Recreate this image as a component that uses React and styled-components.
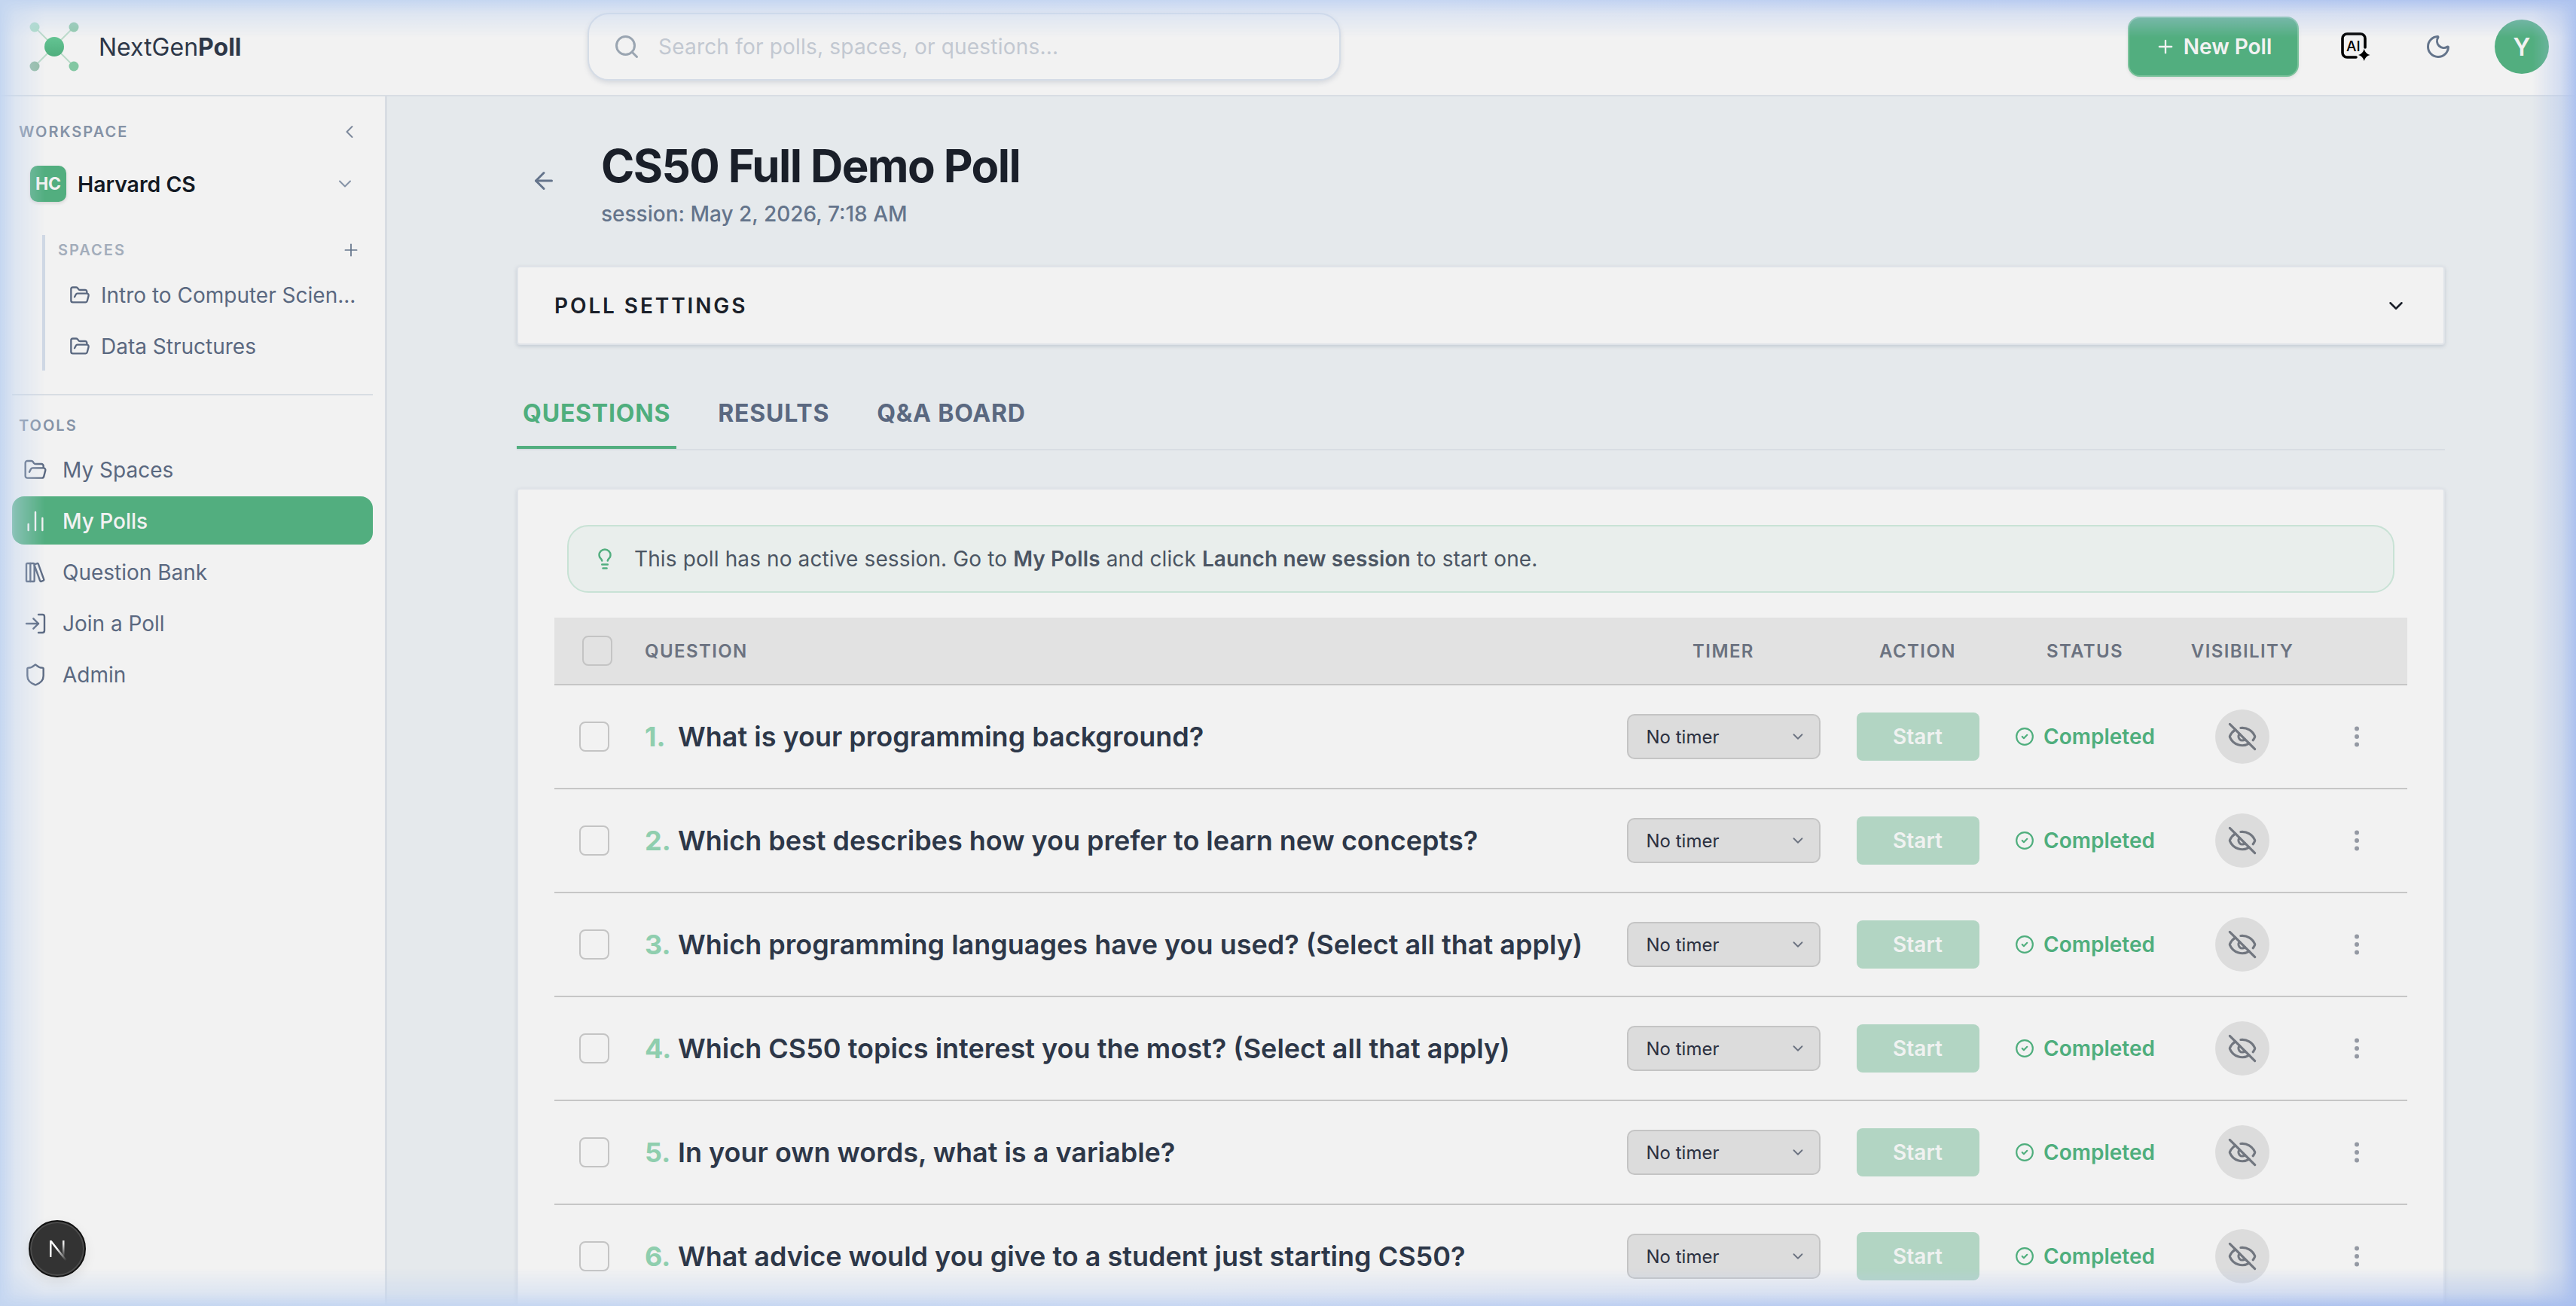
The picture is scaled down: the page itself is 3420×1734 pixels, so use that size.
import React from "react";
import styled, { createGlobalStyle } from "styled-components";
import {
  ArrowLeft, ChartNoAxesColumn, ChevronDown, ChevronLeft, CircleCheck, EllipsisVertical, EyeOff,
  FolderOpen, LibraryBig, Lightbulb, LogIn, Moon, Plus, Search, Shield,
} from "lucide-react";

const Global = createGlobalStyle`
  * { box-sizing: border-box; }
  html, body { margin: 0; padding: 0; height: 100%; overflow: hidden; }
  body { font-family: Inter, "Liberation Sans", sans-serif; background: #e5e9ec; color: #1a1f29; }
`;

const edgeMask = `linear-gradient(to right, #000 0, rgba(0,0,0,.45) 20px, transparent 60px, transparent calc(100% - 58px), rgba(0,0,0,.45) calc(100% - 20px), #000 100%),
    linear-gradient(to bottom, #000 0, rgba(0,0,0,.45) 18px, transparent 50px, transparent calc(100% - 50px), rgba(0,0,0,.45) calc(100% - 18px), #000 100%)`;

const Shell = styled.div`
  position: relative; width: 3420px; height: 1734px; overflow: hidden;
  display: flex; flex-direction: column; background: #e5e9ec;
`;
const Glow = styled.div`
  position: absolute; inset: 0; pointer-events: none; z-index: 5;
  background: linear-gradient(100deg, #c4d6f0 0%, #c6d6f2 50%, #a9bfee 100%);
  -webkit-mask-image: ${edgeMask};
  mask-image: ${edgeMask};
  -webkit-mask-composite: source-over; mask-composite: add;
`;
const TopBar = styled.header`
  height: 128px; flex: none; display: flex; align-items: center; background: #f2f2f2;
  border-bottom: 2px solid #d8dde3; padding: 0 36px 2px 38px;
`;
const Brand = styled.div`
  display: flex; align-items: center; gap: 25px; width: 742px; font-size: 32px; color: #2d3748;
  b { font-weight: 700; }
`;
const SearchBox = styled.div`
  width: 1000px; height: 90px; display: flex; align-items: center; gap: 24px; padding: 0 32px;
  border: 2px solid #d5dce6; border-radius: 28px; background: #f2f2f2;
  box-shadow: 0 3px 6px rgba(100,116,139,.2); color: #c2c8d1; font-size: 28px; letter-spacing: .2px;
  svg { color: #9aa5b1; flex: none; }
`;
const Actions = styled.div`
  margin-left: auto; display: flex; align-items: center;
`;
const NewPoll = styled.button`
  width: 227px; height: 80px; border: 2px solid #7cc39c; border-radius: 16px; background: #52ae7f; color: #f2f2f2;
  display: flex; align-items: center; justify-content: center; gap: 10px; font: 600 28px Inter, sans-serif;
  box-shadow: 0 2px 4px rgba(0,0,0,.08); margin-right: 55px;
`;
const IconSlot = styled.div`
  display: flex; margin-right: ${p => p.$mr}px; color: #64748b;
`;
const Avatar = styled.div`
  width: 72px; height: 72px; border-radius: 50%; background: #52ae7f; color: #f2f2f2; font-size: 32px; font-weight: 600;
  display: flex; align-items: center; justify-content: center;
`;
const Body = styled.div`
  flex: 1; display: flex; min-height: 0;
`;
const Side = styled.aside`
  width: 514px; flex: none; background: #f2f2f2; border-right: 3px solid #d8dde3; padding: 32px 16px 0;
  display: flex; flex-direction: column;
`;
const SideHead = styled.div`
  display: flex; align-items: center; justify-content: space-between; padding: 0 17px 0 9px; height: 30px;
  font-size: 20px; font-weight: 600; letter-spacing: 2px; color: #8592a6; svg { color: #7c889b; }
`;
const Workspace = styled.div`
  display: flex; align-items: center; height: 48px; margin: 30px 0 0 24px; padding-right: 23px;
  font-size: 28.400px; font-weight: 600; color: #141a24;
  svg { margin-left: auto; color: #8592a6; }
`;
const WsBadge = styled.div`
  width: 48px; height: 48px; border-radius: 10px; background: #52ae7f; color: #f2f2f2; font-size: 23px; font-weight: 700;
  display: flex; align-items: center; justify-content: center; margin-right: 15px;
  box-shadow: 0 2px 4px rgba(0,0,0,.12);
`;
const Spaces = styled.div`
  margin: 44px 0 0 40px; border-left: 4px solid #d0d8e4; height: 180px; padding: 6px 0 0 17px;
`;
const SpacesHead = styled.div`
  display: flex; align-items: center; justify-content: space-between; height: 28px; padding-right: 16px; margin-bottom: 12px;
  font-size: 20px; font-weight: 600; letter-spacing: 2px; color: #a3adbb; svg { color: #64748b; }
`;
const SpaceItem = styled.div`
  display: flex; align-items: center; gap: 14px; height: 68px; padding-left: 15px; font-size: 28px; color: #5a6880;
  white-space: nowrap; svg { flex: none; }
`;
const SideRule = styled.div`
  height: 2px; background: #d8dde3; margin-top: 31px;
`;
const ToolsLabel = styled.div`
  margin: 28px 0 0 9px; height: 24px; line-height: 24px; font-size: 20px; font-weight: 600; letter-spacing: 2px; color: #8592a6;
`;
const ToolList = styled.div`
  margin-top: 14px; display: flex; flex-direction: column; gap: 4px;
`;
const ToolItem = styled.div`
  height: 64px; display: flex; align-items: center; gap: 20px; padding: 2px 0 0 15px; border-radius: 16px; font-size: 28px;
  color: ${p => p.$active ? "#f2f2f2" : "#5a6880"}; background: ${p => p.$active ? "#52ae7f" : "transparent"};
  font-weight: ${p => p.$active ? 500 : 400};
`;
const Main = styled.main`
  flex: 1; min-width: 0; overflow: hidden; padding: 56px 174px 0 172px;
`;
const TitleRow = styled.div`
  display: flex; align-items: center; gap: 58px; padding-left: 18px;
`;
const BackIcon = styled.div`
  display: flex; color: #64748b; margin-top: -8px;
`;
const Title = styled.h1`
  margin: 0; font-size: 60px; line-height: 72px; font-weight: 700; letter-spacing: -1.6px; color: #1a1f29;
`;
const Sub = styled.div`
  margin-top: 8px; font-size: 28px; line-height: 40px; font-weight: 500; color: #64748b;
`;
const Settings = styled.div`
  margin-top: 49px; height: 105px; display: flex; align-items: center; justify-content: space-between;
  padding: 0 48px; background: #f2f2f2; border: 2px solid #dfe3e8; border-radius: 4px;
  box-shadow: 0 2px 5px rgba(100,116,139,.25); font-size: 28px; font-weight: 600; letter-spacing: 2.900px; color: #1a1f29;
`;
const Tabs = styled.div`
  margin-top: 44px; display: flex; gap: 47px; border-bottom: 2px solid #d8dde3;
`;
const Tab = styled.div`
  padding: 27px 8px 23px; line-height: 40px; font-size: 32px; font-weight: 700; letter-spacing: .8px;
  color: ${p => p.$active ? "#4fae7d" : "#5a6880"};
  border-bottom: 4px solid ${p => p.$active ? "#52ae7f" : "transparent"};
`;
const Card = styled.section`
  margin-top: 50px; background: #f2f2f2; border: 2px solid #dfe3e8; border-radius: 4px; padding: 47px 48px 0;
  box-shadow: 0 2px 5px rgba(100,116,139,.2);
`;
const Banner = styled.div`
  margin: 0 17px; height: 90px; display: flex; align-items: center; gap: 24px; padding-left: 33px;
  background: #e9eeec; border: 2px solid #c8e2d5; border-radius: 28px; font-size: 28px; color: #4b5563; letter-spacing: .12px;
  b { font-weight: 600; } svg { color: #52ae7f; flex: none; }
`;
const cols = "120px 1288px 288px 228px 216px 202px 1fr";
const HeadRow = styled.div`
  margin-top: 33px; height: 90px; display: grid; grid-template-columns: ${cols}; align-items: center;
  background: #e2e2e2; border-bottom: 2px solid #c6c6c6; font-size: 24px; font-weight: 600; letter-spacing: 1.400px; color: #6b7280;
`;
const HeadCell = styled.div`
  text-align: center;
  &:nth-child(2) { text-align: left; }
`;
const Row = styled.div`
  height: 138px; display: grid; grid-template-columns: ${cols}; align-items: center; border-bottom: 2px solid #c6c6c6;
`;
const Check = styled.div`
  width: 40px; height: 40px; border: 2px solid #c4c4c4; border-radius: 8px; margin-left: ${p => p.$ml}px;
`;
const Question = styled.div`
  font-size: 36px; font-weight: 600; color: #2d3748; white-space: nowrap;
  span { display: inline-block; width: 44px; color: #8fceae; font-weight: 700; }
`;
const TimerSelect = styled.div`
  justify-self: center; width: 257px; height: 60px; display: flex; align-items: center; justify-content: space-between;
  padding: 0 17px 0 24px; background: #dcdcdc; border: 2px solid #c4c4c4; border-radius: 10px; font-size: 24px; color: #2b3040;
  svg { color: #6b7280; }
`;
const StartBtn = styled.div`
  justify-self: center; width: 163px; height: 64px; display: flex; align-items: center; justify-content: center;
  background: #b2d5c3; border-radius: 8px; color: #f0f2f1; font-size: 28px; font-weight: 600;
`;
const Status = styled.div`
  justify-self: center; display: flex; align-items: center; gap: 12px; color: #4fae7d; font-size: 28px; font-weight: 600;
`;
const VisBtn = styled.div`
  justify-self: center; width: 72px; height: 72px; border-radius: 50%; background: #dcdcdc; color: #71767f;
  display: flex; align-items: center; justify-content: center;
`;
const MenuBtn = styled.div`
  display: flex; color: #9499a3; margin-left: 33px;
`;
const DevBadge = styled.div`
  position: absolute; left: 38px; bottom: 38px; width: 76px; height: 76px; border-radius: 50%; z-index: 6;
  background: #333; border: 2px solid #111; box-shadow: inset 0 0 0 2px rgba(255,255,255,.12), 0 6px 16px rgba(0,0,0,.08);
  display: flex; align-items: center; justify-content: center;
`;

const Logo = () => (
  <svg width="68" height="68" viewBox="0 0 68 68">
    <defs>
      <linearGradient id="lg" x1="0" y1="0" x2="0" y2="1"><stop offset="0" stopColor="#64c493" /><stop offset="1" stopColor="#4fae7d" /></linearGradient>
    </defs>
    <path d="M8 8 60 60M60 8 8 60" stroke="#52ae7f" strokeOpacity=".35" strokeWidth="2" />
    <circle cx="8" cy="8" r="6.500" fill="#a8dcc2" />
    <circle cx="60" cy="8" r="6.500" fill="#8fc8aa" />
    <circle cx="8" cy="60" r="6.500" fill="#93bca6" />
    <circle cx="60" cy="60" r="6.500" fill="#82c7a2" />
    <circle cx="34" cy="34" r="13" fill="url(#lg)" />
  </svg>
);
const AiIcon = () => (
  <svg width="40" height="40" viewBox="0 0 40 40">
    <path d="M33 21V9a6 6 0 0 0-6-6H9a6 6 0 0 0-6 6V28a6 6 0 0 0 6 6H21" fill="none" stroke="#000" strokeWidth="3.600" strokeLinecap="round" />
    <text x="8" y="26" fontFamily="Inter, sans-serif" fontSize="19" fontWeight="500" fill="#000">AI</text>
    <path d="M31.700 23Q33.500 29.500 39.500 31Q33.500 32.500 31.700 39Q29.900 32.500 24 31Q29.900 29.500 31.700 23Z" fill="#000" />
  </svg>
);
const NextMark = () => (
  <svg width="36" height="36" viewBox="0 0 36 36">
    <defs>
      <linearGradient id="na" x1="0.2" y1="0" x2="0.9" y2="1"><stop offset="0.35" stopColor="#fff" /><stop offset="1" stopColor="#fff" stopOpacity="0" /></linearGradient>
      <linearGradient id="nb" x1="0" y1="0" x2="0" y2="1"><stop offset="0" stopColor="#fff" stopOpacity="0" /><stop offset="0.8" stopColor="#fff" stopOpacity=".9" /></linearGradient>
    </defs>
    <path d="M8 29V7h2.500L31 33l-2 1.500L10.500 11V29z" fill="url(#na)" />
    <rect x="25" y="7" width="2.500" height="22" fill="url(#nb)" transform="rotate(180 26.250 18)" />
  </svg>
);

const questions = [
  "What is your programming background?",
  "Which best describes how you prefer to learn new concepts?",
  "Which programming languages have you used? (Select all that apply)",
  "Which CS50 topics interest you the most? (Select all that apply)",
  "In your own words, what is a variable?",
  "What advice would you give to a student just starting CS50?",
];
const tools = [
  [FolderOpen, "My Spaces"],
  [ChartNoAxesColumn, "My Polls", true],
  [LibraryBig, "Question Bank"],
  [LogIn, "Join a Poll"],
  [Shield, "Admin"],
];

export default function App() {
  return (
    <Shell>
      <Global />
      <TopBar>
        <Brand><Logo /><div>NextGen<b>Poll</b></div></Brand>
        <SearchBox><Search size={36} strokeWidth={2} />Search for polls, spaces, or questions...</SearchBox>
        <Actions>
          <NewPoll><Plus size={28} strokeWidth={2} />New Poll</NewPoll>
          <IconSlot $mr={72}><AiIcon /></IconSlot>
          <IconSlot $mr={57}><Moon size={36} /></IconSlot>
          <Avatar>Y</Avatar>
        </Actions>
      </TopBar>
      <Body>
        <Side>
          <SideHead>WORKSPACE<ChevronLeft size={28} strokeWidth={1.700} /></SideHead>
          <Workspace><WsBadge>HC</WsBadge>Harvard CS<ChevronDown size={28} strokeWidth={1.700} /></Workspace>
          <Spaces>
            <SpacesHead>SPACES<Plus size={26} strokeWidth={1.600} /></SpacesHead>
            <SpaceItem><FolderOpen size={28} />Intro to Computer Scien...</SpaceItem>
            <SpaceItem><FolderOpen size={28} />Data Structures</SpaceItem>
          </Spaces>
          <SideRule />
          <ToolsLabel>TOOLS</ToolsLabel>
          <ToolList>
            {tools.map(([I, label, active]) => (
              <ToolItem key={label} $active={active}><I size={32} strokeWidth={1.800} />{label}</ToolItem>
            ))}
          </ToolList>
        </Side>
        <Main>
          <TitleRow>
            <BackIcon><ArrowLeft size={36} /></BackIcon>
            <div>
              <Title>CS50 Full Demo Poll</Title>
              <Sub>session: May 2, 2026, 7:18 AM</Sub>
            </div>
          </TitleRow>
          <Settings>POLL SETTINGS<ChevronDown size={30} color="#1a1f29" /></Settings>
          <Tabs>
            <Tab $active>QUESTIONS</Tab>
            <Tab>RESULTS</Tab>
            <Tab>Q&amp;A BOARD</Tab>
          </Tabs>
          <Card>
            <Banner>
              <Lightbulb size={30} />
              <div>This poll has no active session. Go to <b>My Polls</b> and click <b>Launch new session</b> to start one.</div>
            </Banner>
            <HeadRow>
              <Check $ml={37} />
              <HeadCell>QUESTION</HeadCell>
              <HeadCell>TIMER</HeadCell>
              <HeadCell>ACTION</HeadCell>
              <HeadCell>STATUS</HeadCell>
              <HeadCell>VISIBILITY</HeadCell>
              <div />
            </HeadRow>
            {questions.map((q, i) => (
              <Row key={q}>
                <Check $ml={33} />
                <Question><span>{i + 1}.</span>{q}</Question>
                <TimerSelect>No timer<ChevronDown size={22} /></TimerSelect>
                <StartBtn>Start</StartBtn>
                <Status><CircleCheck size={26} />Completed</Status>
                <VisBtn><EyeOff size={40} strokeWidth={1.900} /></VisBtn>
                <MenuBtn><EllipsisVertical size={36} /></MenuBtn>
              </Row>
            ))}
          </Card>
        </Main>
      </Body>
      <DevBadge><NextMark /></DevBadge>
      <Glow />
    </Shell>
  );
}
